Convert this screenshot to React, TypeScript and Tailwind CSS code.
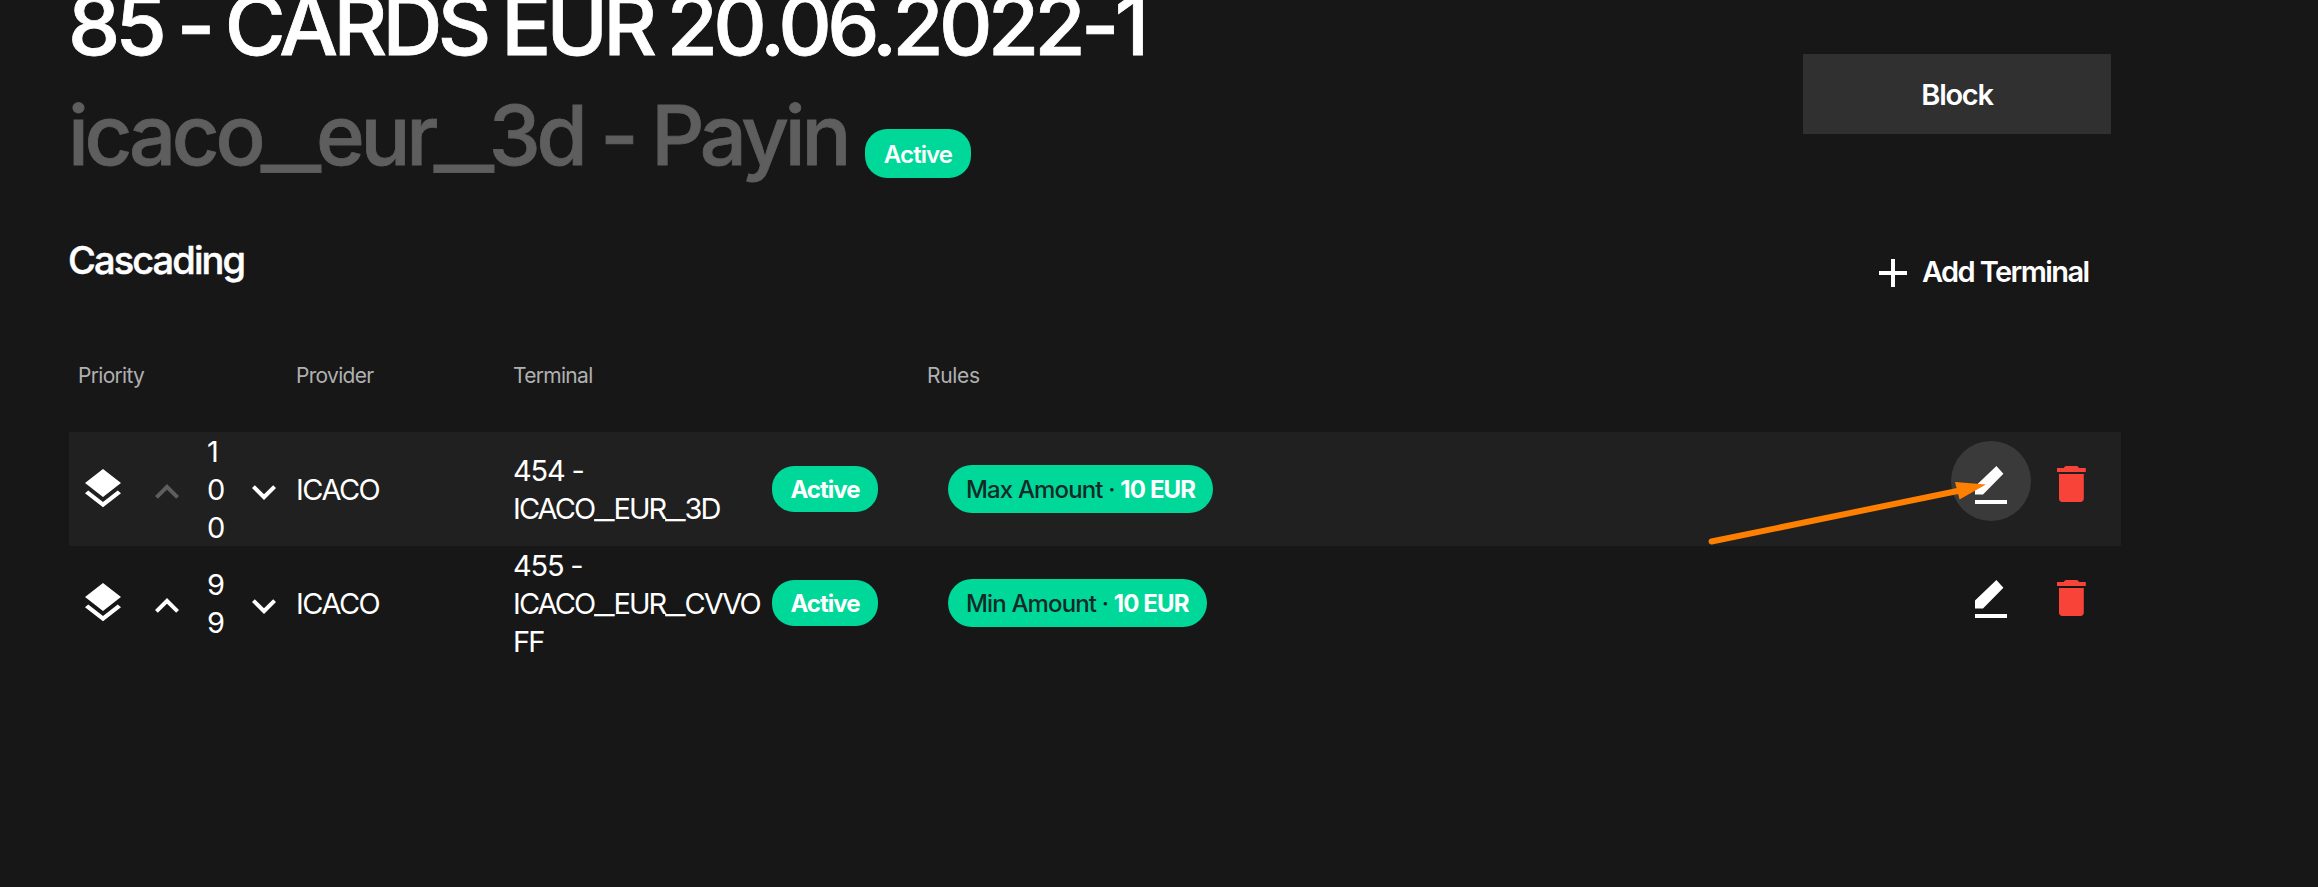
import React from "react";

const ROWS = [
  {
    digits: ["1", "0", "0"],
    upMuted: true,
    terminal: ["454 -", "ICACO_EUR_3D"],
    rule: "Max Amount",
    highlighted: true,
  },
  {
    digits: ["9", "9"],
    upMuted: false,
    terminal: ["455 -", "ICACO_EUR_CVVO", "FF"],
    rule: "Min Amount",
    highlighted: false,
  },
];

function Icon({ d, className }: { d: string; className: string }) {
  return (
    <svg viewBox="0 0 24 24" className={`size-12 shrink-0 ${className}`} fill="currentColor">
      <path d={d} />
    </svg>
  );
}

/* Identifier text with underscores drawn wider than the font's own. */
function Identifier({ text }: { text: string }) {
  return (
    <>
      {text.split(/(_)/).map((part, i) =>
        part === "_" ? (
          <span key={i} className="inline-block w-[0.66em] origin-left scale-x-[1.56]">
            _
          </span>
        ) : (
          <span key={i}>{part}</span>
        ),
      )}
    </>
  );
}

const LAYERS =
  "M11.99 18.54l-7.37-5.73L3 14.07l9 7 9-7-1.63-1.27-7.38 5.74zM12 16l7.36-5.73L21 9l-9-7-9 7 1.63 1.27L12 16z";
const UP = "M12 8l-6 6 1.41 1.41L12 10.83l4.59 4.58L18 14z";
const DOWN = "M16.59 8.59L12 13.17 7.41 8.59 6 10l6 6 6-6z";
const TRASH =
  "M6 19.4c0 .9.7 1.6 1.6 1.6h9.2c.9 0 1.6-.7 1.6-1.6V7H6v12.4zM19.4 4H16c-.4-.7-.8-1-1.4-1H9.8c-.6 0-1 .3-1.4 1H5v2h14.4V4z";
const PENCIL = "M4 13.3v3.9h4L18.2 6.9 14.7 3zM4 20h16v2H4z";

function Row({ row }: { row: (typeof ROWS)[number] }) {
  return (
    <div className={`flex h-[114px] items-center pl-[10px] ${row.highlighted ? "bg-[#202020]" : ""}`}>
      <Icon d={LAYERS} className="text-white" />
      <Icon d={UP} className={`ml-4 mt-[6px] ${row.upMuted ? "text-[#5e5e5e]" : "text-white"}`} />
      <div className="ml-4 w-[33px] pt-px text-[29px] leading-[38px]">
        {row.digits.map((d, i) => (
          <div key={i}>{d}</div>
        ))}
      </div>
      <Icon d={DOWN} className="mt-[6px] text-white" />
      <div className="ml-[8px] w-[217px] pt-px text-[29px] leading-[38px] tracking-[-1.5px]">ICACO</div>
      <div className="w-[259px] pt-px text-[29px] leading-[38px] tracking-[-1.9px] whitespace-nowrap">
        {row.terminal.map((text) => (
          <div key={text} className={text.includes("-") ? "tracking-[-1.2px]" : ""}>
            <Identifier text={text} />
          </div>
        ))}
      </div>
      <div className="flex h-[46px] w-[106px] items-center justify-center rounded-[22px] bg-[#00d899] pt-[2px] text-[24px] font-bold tracking-[-1px]">
        Active
      </div>
      <div className="ml-[70px] flex h-12 items-center rounded-[24px] bg-[#00d899] px-[18px] pt-[2px] text-[24px] tracking-[-0.85px] whitespace-pre">
        <span className="font-medium text-[#142a26]">{row.rule} · </span>
        <span className="font-bold">10 EUR</span>
      </div>
      <div className="mr-[26px] ml-auto flex items-center gap-4">
        <div
          className={`-mt-4 flex size-20 items-center justify-center rounded-full ${row.highlighted ? "bg-[#3a3a3a]" : ""}`}
        >
          <Icon d={PENCIL} className="mt-[6px] text-white" />
        </div>
        <Icon d={TRASH} className="-mt-[10px] text-[#f74338]" />
      </div>
    </div>
  );
}

export default function App() {
  return (
    <div className="relative h-[887px] w-[2318px] overflow-hidden bg-[#171717] pl-[69px] font-['Inter',sans-serif] text-white">
      <header className="-mt-[30px] flex h-[240px]">
        <div className="w-[1734px] text-[83px] leading-[110px] font-medium whitespace-nowrap">
          <h1 className="-ml-px tracking-[-4.67px] [-webkit-text-stroke:0.8px_currentColor] [word-spacing:-3px]">
            85 - CARDS EUR 20.06.2022-1
          </h1>
          <div className="-ml-px flex">
            <span className="w-[797px] tracking-[-4.3px] text-[#5e5e5e] [-webkit-text-stroke:0.8px_currentColor] [word-spacing:-1px]">
              <Identifier text="icaco_eur_3d - Payin" />
            </span>
            <span className="mt-[49px] flex h-[49px] w-[106px] items-center justify-center rounded-[22px] bg-[#00d899] pt-[2px] text-[24px] leading-none font-semibold tracking-[-0.9px]">
              Active
            </span>
          </div>
        </div>
        <button className="mt-[84px] h-20 w-[308px] bg-[#303030] pt-[2px] text-[29px] font-semibold tracking-[-1.3px]">
          Block
        </button>
      </header>
      <div className="flex h-[140px]">
        <h2 className="mt-[25px] -ml-px w-[1811px] text-[38px] leading-[50px] font-medium tracking-[-1.9px] [-webkit-text-stroke:0.5px_currentColor]">
          Cascading
        </h2>
        <button className="mt-[43px] flex h-[40px] items-center text-[29px] font-semibold tracking-[-1.6px]">
          <svg viewBox="0 0 28 28" className="mr-[15px] size-7" fill="none" stroke="currentColor" strokeWidth="4">
            <path d="M14 0v28M0 14h28" />
          </svg>
          <span className="-mt-[3px]">Add Terminal</span>
        </button>
      </div>
      <div className="flex h-[82px] pl-[9px] text-[21px] leading-[52px] tracking-[-0.7px] text-[#b0b0b0]">
        <div className="w-[218px]">Priority</div>
        <div className="w-[217px]">Provider</div>
        <div className="w-[414px]">Terminal</div>
        <div className="tracking-[-0.3px]">Rules</div>
      </div>
      <div className="w-[2052px]">
        {ROWS.map((row) => (
          <Row key={row.rule} row={row} />
        ))}
      </div>
      <svg className="absolute top-[470px] left-[1700px] h-[90px] w-[300px]" viewBox="1700 470 300 90">
        <path d="M1711.5 541.5L1960 490.5" stroke="#ff7f00" strokeWidth="6" strokeLinecap="round" />
        <path d="M1986 484.5L1955 482L1959.5 499.5Z" fill="#ff7f00" />
      </svg>
    </div>
  );
}
